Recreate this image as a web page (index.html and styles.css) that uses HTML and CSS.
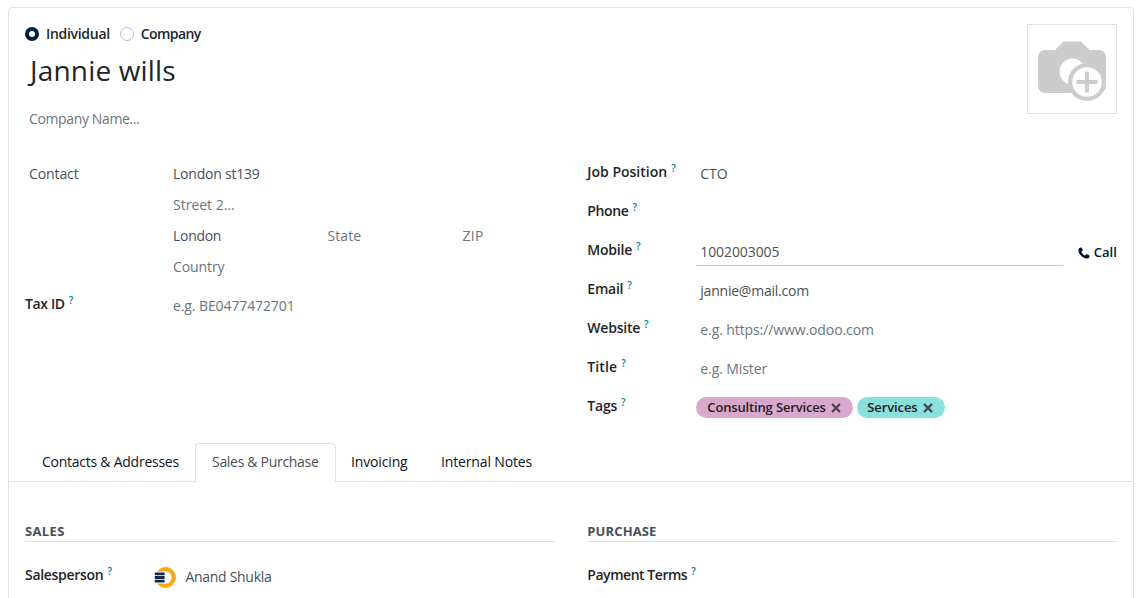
FILE: index.html
```html
<!DOCTYPE html>
<html lang="en">
<head>
<meta charset="utf-8">
<title>Jannie wills</title>
<link rel="stylesheet" href="styles.css">
</head>
<body>
<main class="sheet">
  <header class="head">
    <div class="identity">
      <div class="kinds">
        <span class="radio radio-on"></span><span class="kind-label sp-n3">Individual</span>
        <span class="radio"></span><span class="kind-label sp-n6">Company</span>
      </div>
      <h1 class="name">Jannie wills</h1>
      <div class="company hint sp-n4">Company Name...</div>
    </div>
    <div class="photo">
      <svg width="88" height="88" viewBox="0 0 88 88">
        <path fill="#ccc" d="M17 25h10l8.500-8.500h17.500l8.500 8.500h9.500a7 7 0 0 1 7 7v29a7 7 0 0 1-7 7H17a7 7 0 0 1-7-7v-29a7 7 0 0 1 7-7z"/>
        <circle cx="44.500" cy="46.500" r="13" fill="#fff"/>
        <circle cx="59" cy="57" r="19" fill="#ccc"/>
        <circle cx="59" cy="57" r="14.800" fill="#fff"/>
        <path d="M59 46.500v21M48.500 57h21" stroke="#ccc" stroke-width="4"/>
      </svg>
    </div>
  </header>

  <section class="columns">
    <div class="group">
      <div class="row row-left">
        <div class="label-plain sp-n1">Contact</div>
        <div class="address">
          <div class="value sp-n2">London st139</div>
          <div class="value hint">Street 2...</div>
          <div class="city">
            <div class="value sp-n3">London</div>
            <div class="value hint sp-p1">State</div>
            <div class="value hint sp-p3">ZIP</div>
          </div>
          <div class="value hint sp-n1">Country</div>
        </div>
      </div>
      <div class="row row-left">
        <div class="label"><span class="sp-n4">Tax ID</span><sup>?</sup></div>
        <div class="value hint sp-n1">e.g. BE0477472701</div>
      </div>
    </div>
    <div class="group">
      <div class="row row-right">
        <div class="label"><span>Job Position</span><sup>?</sup></div>
        <div class="value">CTO</div>
      </div>
      <div class="row row-right">
        <div class="label"><span class="sp-n4">Phone</span><sup>?</sup></div>
        <div class="value"></div>
      </div>
      <div class="row row-right">
        <div class="label"><span class="sp-n2">Mobile</span><sup>?</sup></div>
        <div class="phone">
          <div class="value phone-input sp-n1">1002003005</div>
          <div class="call">
            <svg width="12" height="12" viewBox="0 0 12 12"><path fill="#01172e" d="M2.900.5 1.400 1C.5 1.600.2 2.600.5 4c.8 3.600 3.700 6.600 7.400 7.500 1.500.3 2.700 0 3.300-.9l.5-1.500c.1-.3 0-.5-.3-.7L9.200 7.200c-.3-.2-.6-.1-.8.1l-.9 1c-.2.2-.4.2-.7.100C5.300 7.600 4.300 6.600 3.500 5.200c-.1-.3-.1-.5.1-.7l1-.8c.3-.2.3-.4.2-.7L3.600.8C3.500.5 3.200.4 2.900.5z"/></svg>
            <span>Call</span>
          </div>
        </div>
      </div>
      <div class="row row-right">
        <div class="label"><span class="sp-n2">Email</span><sup>?</sup></div>
        <div class="value sp-n2">jannie@mail.com</div>
      </div>
      <div class="row row-right">
        <div class="label"><span class="sp-n2">Website</span><sup>?</sup></div>
        <div class="value hint sp-n1">e.g. https://www.odoo.com</div>
      </div>
      <div class="row row-right">
        <div class="label"><span class="sp-p1">Title</span><sup>?</sup></div>
        <div class="value hint sp-n1">e.g. Mister</div>
      </div>
      <div class="row row-right">
        <div class="label"><span class="sp-n2">Tags</span><sup>?</sup></div>
        <div class="tags">
          <span class="tag tag-pink"><span class="sp-n15">Consulting Services</span><svg width="10" height="10" viewBox="0 0 10 10"><path d="M1 1l8 8M9 1 1 9"/></svg></span>
          <span class="tag tag-teal"><span class="sp-n1">Services</span><svg width="10" height="10" viewBox="0 0 10 10"><path d="M1 1l8 8M9 1 1 9"/></svg></span>
        </div>
      </div>
    </div>
  </section>

  <nav class="tabs">
    <div class="tab tab-contacts sp-n25">Contacts &amp; Addresses</div>
    <div class="tab tab-active sp-n3">Sales &amp; Purchase</div>
    <div class="tab tab-invoicing sp-n15">Invoicing</div>
    <div class="tab sp-n15">Internal Notes</div>
  </nav>

  <section class="columns page">
    <div class="group">
      <h2 class="section sp-p3">SALES</h2>
      <div class="row row-user">
        <div class="label"><span class="sp-n3">Salesperson</span><sup>?</sup></div>
        <div class="user">
          <svg width="22" height="22" viewBox="0 0 22 22">
            <circle cx="11.500" cy="11.500" r="8.300" fill="none" stroke="#ffa50f" stroke-width="4.200"/>
            <path fill="#fff" d="M0 5.500h11v12H0z"/>
            <path d="M.8 7.800h9.800M.8 11.500h9.800M.8 15.200h9.800" stroke="#10294b" stroke-width="2.800"/>
          </svg>
          <span class="sp-n3">Anand Shukla</span>
        </div>
      </div>
    </div>
    <div class="group">
      <h2 class="section">PURCHASE</h2>
      <div class="row row-user">
        <div class="label"><span class="sp-n5">Payment Terms</span><sup>?</sup></div>
      </div>
    </div>
  </section>
</main>
</body>
</html>
```
FILE: styles.css
```css
* { box-sizing: border-box; }
html, body { height: 100%; }
body {
  margin: 0;
  padding: 7px 8px 0;
  overflow: hidden;
  background: #fff;
  color: #495057;
  font: 14px/31px "Open Sans", "Noto Sans", sans-serif;
}
svg { display: block; flex: none; }

.sheet {
  height: 610px;
  border: 1px solid #dee2e6;
  border-radius: 4px;
  background: #fff;
}

/* Header */
.head {
  display: flex;
  justify-content: space-between;
  padding: 16px 16px 0;
  height: 150px;
}
.kinds {
  display: flex;
  align-items: center;
  height: 20px;
  color: #212529;
  font-weight: 600;
}
.radio {
  width: 14px;
  height: 14px;
  border: 1px solid #bcbfc3;
  border-radius: 50%;
}
.radio-on { border: 4px solid #01213f; }
.kind-label {
  margin: 0 10px 0 7px;
  padding-bottom: 2px;
}
.name {
  margin: 6px 0 0;
  padding-left: 5px;
  color: #212529;
  font-size: 28px;
  font-weight: 400;
  line-height: 40px;
  letter-spacing: .18px;
}
.company { margin-top: 13px; padding-left: 4px; }
.photo {
  width: 90px;
  height: 90px;
  border: 1px solid #dee2e6;
}
.hint { color: #6c757d; }

/* Field groups */
.columns {
  display: grid;
  grid-template-columns: 530px 530.500px;
  column-gap: 32.300px;
  padding-left: 16px;
}
.group {
  display: flex;
  flex-direction: column;
  gap: 8px;
}
.row { display: grid; min-height: 31px; }
.row-left { grid-template-columns: 144px 1fr; }
.row-right { grid-template-columns: 109px 1fr; }
.row-user { grid-template-columns: 129px 1fr; }
.label {
  color: #212529;
  font-weight: 600;
  line-height: 27px;
  white-space: nowrap;
}
.label sup {
  position: relative;
  top: -5px;
  margin-left: 4px;
  color: #0180a5;
  font-size: 10px;
  line-height: 0;
  vertical-align: baseline;
}
.label-plain { padding-left: 4px; }
.value { padding-left: 4px; white-space: nowrap; }
.city {
  display: grid;
  grid-template-columns: 154.500px 135px 1fr;
}
.phone { display: flex; justify-content: space-between; }
.phone-input {
  width: 367px;
  height: 30px;
  border-bottom: 1px solid #c2c4c7;
}
.call {
  display: flex;
  align-items: center;
  gap: 4px;
  height: 31px;
  padding: 2px 1px 0 0;
  color: #01172e;
  font-size: 13px;
  font-weight: 600;
  line-height: 29px;
}
.tags { display: flex; gap: 4px; padding-top: 5px; }
.tag {
  display: flex;
  align-items: center;
  gap: 5px;
  height: 21px;
  padding: 0 0 0 11px;
  border-radius: 11px;
  color: #1f1b20;
  font-size: 13px;
  font-weight: 600;
  line-height: 21px;
  white-space: nowrap;
}
.tag path { stroke: #3f3d42; stroke-width: 2; }
.tag-pink { width: 157px; background: #dba8cd; }
.tag-teal { width: 88px; padding-left: 10px; background: #89e1db; }

/* Tabs */
.tabs {
  display: flex;
  height: 39px;
  margin-top: 20px;
  padding-left: 17px;
  border-bottom: 1px solid #dee2e6;
  color: #0b1622;
}
.tab {
  height: 39px;
  padding: 0 15px 0 16px;
  line-height: 38px;
  white-space: nowrap;
}
.tab-contacts { width: 169px; }
.tab-active {
  width: 141px;
  border: 1px solid #dee2e6;
  border-bottom: 0;
  border-radius: 4px 4px 0 0;
  background: #fff;
  color: #495057;
  line-height: 36px;
}
.tab-invoicing { width: 89px; padding-left: 15px; }

/* Tab page */
.page { padding-top: 39px; }
.section {
  height: 21px;
  margin: 0 0 11px;
  border-bottom: 1px solid #dee2e6;
  color: #495057;
  font-size: 13px;
  font-weight: 700;
  line-height: 20px;
  letter-spacing: .12px;
}
.user {
  display: flex;
  align-items: center;
  gap: 9.500px;
  height: 31px;
}

/* Letter-spacing steps */
.sp-n6 { letter-spacing: -.6px; }
.sp-n5 { letter-spacing: -.46px; }
.sp-n4 { letter-spacing: -.37px; }
.sp-n3 { letter-spacing: -.3px; }
.sp-n25 { letter-spacing: -.25px; }
.sp-n2 { letter-spacing: -.22px; }
.sp-n15 { letter-spacing: -.15px; }
.sp-n1 { letter-spacing: -.1px; }
.sp-p1 { letter-spacing: .1px; }
.sp-p3 { letter-spacing: .35px; }
```
